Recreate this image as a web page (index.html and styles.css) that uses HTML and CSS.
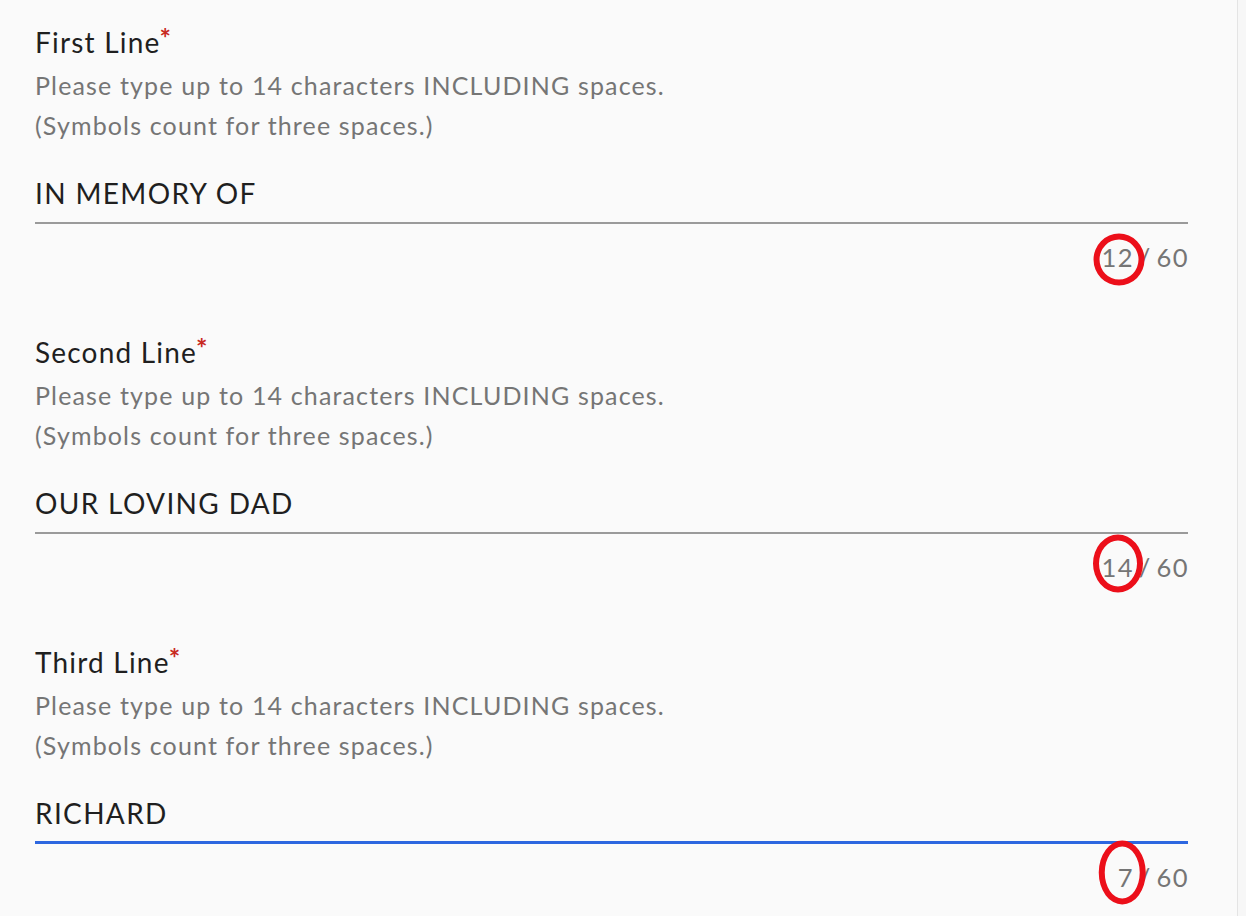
FILE: index.html
```html
<!DOCTYPE html>
<html lang="en">
<head>
<meta charset="utf-8">
<title>Engraving lines</title>
<link rel="stylesheet" href="styles.css">
</head>
<body>
<div class="page">
  <main class="form">
    <section class="field">
      <div class="label">First Line<span class="req">*</span></div>
      <div class="help">Please type up to 14 characters INCLUDING spaces.<br>(Symbols count for three spaces.)</div>
      <input class="entry" type="text" value="IN MEMORY OF">
      <div class="counter"><span class="count">12<span class="ring ring-a"></span></span> / 60</div>
    </section>
    <section class="field">
      <div class="label">Second Line<span class="req">*</span></div>
      <div class="help">Please type up to 14 characters INCLUDING spaces.<br>(Symbols count for three spaces.)</div>
      <input class="entry" type="text" value="OUR LOVING DAD">
      <div class="counter"><span class="count">14<span class="ring ring-b"></span></span> / 60</div>
    </section>
    <section class="field">
      <div class="label">Third Line<span class="req">*</span></div>
      <div class="help">Please type up to 14 characters INCLUDING spaces.<br>(Symbols count for three spaces.)</div>
      <input class="entry entry-active" type="text" value="RICHARD">
      <div class="counter"><span class="count">7<span class="ring ring-c"></span></span> / 60</div>
    </section>
  </main>
  <div class="edge"></div>
</div>
</body>
</html>
```
FILE: styles.css
```css
html, body {
  margin: 0;
  padding: 0;
  background: #fafafa;
}
body {
  font-family: Lato, "Open Sans", "Liberation Sans", sans-serif;
  color: #222;
}
.page {
  display: flex;
  height: 916px;
  overflow: hidden;
}
.form {
  width: 1153px;
  padding: 24px 49px 0 35px;
  border-right: 1px solid #e4e4e4;
  display: flex;
  flex-direction: column;
  gap: 62px;
}
.edge {
  flex: 1;
  background: #f7f7f7;
}
.field {
  display: flex;
  flex-direction: column;
}
.label {
  font-size: 28px;
  line-height: 36px;
  color: #1f1f1f;
  letter-spacing: 1.2px;
}
.req {
  color: #c8291f;
  font-size: 27px;
  font-weight: 700;
  vertical-align: top;
  line-height: 27px;
  letter-spacing: 0;
  margin-left: -1px;
}
.help {
  margin-top: 5px;
  font-size: 25px;
  line-height: 40px;
  color: #757575;
  letter-spacing: 1.15px;
}
.entry {
  margin: 19px 0 0;
  height: 58px;
  padding: 0;
  border: none;
  border-bottom: 2px solid #9a9a9a;
  background: transparent;
  font-family: inherit;
  font-size: 28px;
  letter-spacing: 1.35px;
  color: #1f1f1f;
  outline: none;
  box-sizing: content-box;
}
.entry-active {
  border-bottom: 3px solid #2d67e0;
  height: 57px;
}
.counter {
  margin-top: 18px;
  margin-right: -1px;
  text-align: right;
  font-size: 25.5px;
  line-height: 30px;
  color: #757575;
  letter-spacing: 1.4px;
  word-spacing: -3px;
}
.count {
  position: relative;
  display: inline-block;
  word-spacing: 0;
}
.ring {
  position: absolute;
  left: 50%;
  top: 50%;
  border: 6px solid #ec0f1a;
  border-radius: 50%;
  box-sizing: border-box;
}
.ring-a {
  width: 51px;
  height: 52px;
  transform: translate(-48%, -45%);
}
.ring-b {
  width: 50px;
  height: 58px;
  transform: translate(-50%, -56%);
}
.ring-c {
  width: 47px;
  height: 64px;
  transform: translate(-58%, -57%);
}
```
